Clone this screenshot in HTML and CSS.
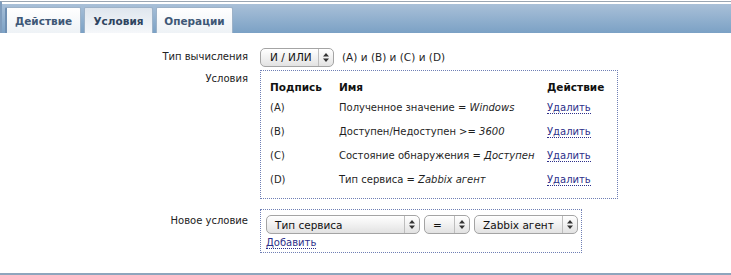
FILE: index.html
```html
<!DOCTYPE html>
<html lang="ru">
<head>
    <meta charset="UTF-8">
    <title>Условия</title>
    <link rel="stylesheet" href="styles.css">
</head>
<body>
    <div class="page">
        <div class="tabbar">
            <a class="tab">Действие</a>
            <a class="tab active">Условия</a>
            <a class="tab">Операции</a>
        </div>

        <div class="form">
            <div class="label lbl-calc">Тип вычисления</div>
            <div class="field calc">
                <div class="select sel-calc">
                    <span class="value">И / ИЛИ</span>
                    <span class="arrows"><svg width="6" height="9" viewBox="0 0 6 9"><path d="M3 0 L6 3.5 L0 3.5 Z M0 5.5 L6 5.5 L3 9 Z" fill="#333"/></svg></span>
                </div>
                <span class="formula">(A) и (B) и (C) и (D)</span>
            </div>

            <div class="label lbl-cond">Условия</div>
            <div class="field">
                <div class="box conditions">
                    <table>
                        <tr class="head">
                            <th class="c-tag">Подпись</th>
                            <th class="c-name">Имя</th>
                            <th class="c-act">Действие</th>
                        </tr>
                        <tr>
                            <td>(A)</td>
                            <td>Полученное значение = <i>Windows</i></td>
                            <td><a class="link">Удалить</a></td>
                        </tr>
                        <tr>
                            <td>(B)</td>
                            <td>Доступен/Недоступен &gt;= <i>3600</i></td>
                            <td><a class="link">Удалить</a></td>
                        </tr>
                        <tr>
                            <td>(C)</td>
                            <td>Состояние обнаружения = <i>Доступен</i></td>
                            <td><a class="link">Удалить</a></td>
                        </tr>
                        <tr>
                            <td>(D)</td>
                            <td>Тип сервиса = <i>Zabbix агент</i></td>
                            <td><a class="link">Удалить</a></td>
                        </tr>
                    </table>
                </div>
            </div>

            <div class="label lbl-new">Новое условие</div>
            <div class="field">
                <div class="box newcond">
                    <div class="selects">
                        <div class="select sel-type">
                            <span class="value">Тип сервиса</span>
                            <span class="arrows"><svg width="6" height="9" viewBox="0 0 6 9"><path d="M3 0 L6 3.5 L0 3.5 Z M0 5.5 L6 5.5 L3 9 Z" fill="#333"/></svg></span>
                        </div>
                        <div class="select sel-op">
                            <span class="value">=</span>
                            <span class="arrows"><svg width="6" height="9" viewBox="0 0 6 9"><path d="M3 0 L6 3.5 L0 3.5 Z M0 5.5 L6 5.5 L3 9 Z" fill="#333"/></svg></span>
                        </div>
                        <div class="select sel-val">
                            <span class="value">Zabbix агент</span>
                            <span class="arrows"><svg width="6" height="9" viewBox="0 0 6 9"><path d="M3 0 L6 3.5 L0 3.5 Z M0 5.5 L6 5.5 L3 9 Z" fill="#333"/></svg></span>
                        </div>
                    </div>
                    <a class="link">Добавить</a>
                </div>
            </div>
        </div>
    </div>
</body>
</html>
```

FILE: styles.css
```css
* {
    margin: 0;
    padding: 0;
    box-sizing: border-box;
}

body {
    font-family: "DejaVu Sans", Verdana, sans-serif;
    font-size: 10px;
    color: #1f1f1f;
    background: #fff;
    width: 731px;
    height: 275px;
    overflow: hidden;
}

.page {
    height: 275px;
    border-bottom: 2px solid #8ea5bd;
    display: flex;
    flex-direction: column;
}

.tabbar {
    margin-top: 1px;
    border-top: 1px solid #9aa6b3;
    height: 32px;
    padding: 4px 0 0 3px;
    display: flex;
    gap: 3px;
    align-items: flex-end;
    background: linear-gradient(#fff 0, #fff 2px, #a9c0d8 2px, #7ba1c5 100%);
    border-left: 2px solid #7f9cbc;
}

.tab {
    display: flex;
    align-items: center;
    justify-content: center;
    height: 26px;
    padding: 0 11px;
    font-weight: bold;
    font-size: 10.5px;
    color: #3f5877;
    background: linear-gradient(#ffffff, #eef2f6);
    border: 1px solid #9db2c8;
    border-bottom: none;
    border-radius: 2px 2px 0 0;
}

.tab:first-child {
    width: 76px;
    border-left: 2px solid #6f8fb2;
}

.tab.active {
    width: 69px;
    color: #2f4460;
    background: linear-gradient(#dfe6ee, #f5f7fa);
}

.tab:last-child {
    width: 77px;
}

.form {
    display: grid;
    grid-template-columns: 248px 1fr;
    column-gap: 12px;
    padding-top: 14px;
}

.label {
    text-align: right;
    color: #222;
}

.lbl-calc {
    padding-top: 4px;
}

.lbl-cond {
    padding-top: 3px;
}

.lbl-new {
    padding-top: 6px;
    margin-top: 10px;
}

.field.calc {
    display: flex;
    align-items: center;
    gap: 8px;
    height: 20px;
    margin-bottom: 3px;
}

.formula {
    font-size: 10.5px;
}

.select {
    display: flex;
    align-items: stretch;
    height: 19px;
    border: 1px solid #a4a4a4;
    border-radius: 5px;
    background: linear-gradient(#ffffff, #f1f1f1 50%, #e2e2e2);
    box-shadow: inset 0 1px 0 #fff;
    font-size: 10.5px;
    color: #111;
}

.select .value {
    flex: 1;
    display: flex;
    align-items: center;
    padding-left: 8px;
}

.select .arrows {
    width: 15px;
    display: flex;
    align-items: center;
    justify-content: center;
    border-left: 1px solid #bdbdbd;
}

.sel-calc {
    width: 74px;
}

.sel-calc .value {
    padding-left: 9px;
}

.box {
    border: 1px dotted #6f7fb5;
}

.conditions {
    width: 358px;
    height: 129px;
    padding: 5px 0 7px 9px;
}

.conditions table {
    border-collapse: collapse;
}

.conditions th {
    text-align: left;
    font-size: 10.5px;
    font-weight: bold;
    color: #111;
    height: 19px;
    vertical-align: top;
    padding-top: 5px;
}

.conditions td {
    height: 24px;
    vertical-align: middle;
}

.c-tag {
    width: 69px;
}

.c-name {
    width: 208px;
}

.conditions i {
    font-style: italic;
}

.link {
    color: #2d2f8a;
    text-decoration: none;
    border-bottom: 1px dotted #2d2f8a;
}

.newcond {
    width: 322px;
    margin-top: 10px;
    padding: 5px 0 4px 5px;
}

.selects {
    display: flex;
    gap: 4px;
    margin-bottom: 3px;
}

.sel-type {
    width: 154px;
}

.sel-op {
    width: 46px;
}

.sel-val {
    width: 104px;
}
```
